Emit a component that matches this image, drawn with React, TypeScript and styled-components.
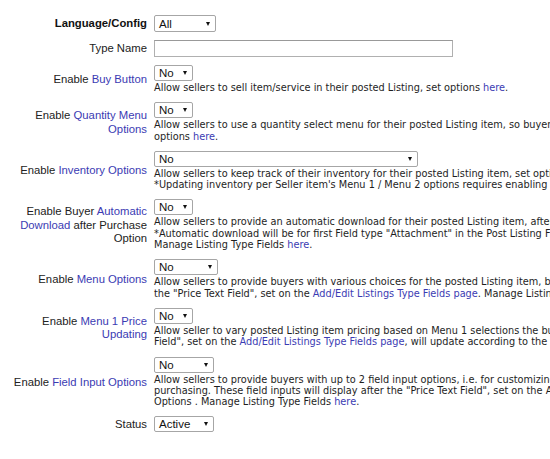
import React from "react";
import styled, { createGlobalStyle } from "styled-components";

const GlobalStyle = createGlobalStyle`
  html, body {
    margin: 0;
    padding: 0;
    background: #ffffff;
    overflow: hidden;
  }
  body {
    font-family: "Liberation Sans", Arial, sans-serif;
    color: #222222;
  }
`;

const Form = styled.div`
  display: flex;
  flex-direction: column;
  gap: 8px;
  padding: 15px 0 0 8px;
  width: 900px;
`;

const Row = styled.div`
  display: grid;
  grid-template-columns: 139px 1fr;
  column-gap: 7px;
  align-items: center;
`;

const Label = styled.div<{ $bold?: boolean }>`
  text-align: right;
  font-family: "Liberation Sans", Arial, sans-serif;
  font-size: 11.3px;
  line-height: 13.4px;
  font-weight: ${(p) => (p.$bold ? 700 : 400)};
  color: ${(p) => (p.$bold ? "#111111" : "#222222")};
`;

const Link = styled.span`
  color: #3b3bb3;
`;

const Field = styled.div`
  display: flex;
  flex-direction: column;
  align-items: flex-start;
  min-width: 0;
`;

const SelectBox = styled.div<{ $w: number; $h?: number }>`
  box-sizing: border-box;
  width: ${(p) => p.$w}px;
  height: ${(p) => p.$h ?? 16}px;
  display: flex;
  align-items: center;
  justify-content: space-between;
  padding: 0 4px 0 4px;
  border: 1px solid #a6a6a6;
  border-radius: 2px;
  background: #ffffff;
  font-family: "Liberation Sans", Arial, sans-serif;
  font-size: 11.5px;
  color: #111111;
`;

const Arrow = styled.span`
  width: 0;
  height: 0;
  border-left: 2.5px solid transparent;
  border-right: 2.5px solid transparent;
  border-top: 4px solid #111111;
  margin-right: 1px;
`;

const TextInput = styled.div`
  box-sizing: border-box;
  width: 299px;
  height: 17px;
  border: 1px solid #b0b0b0;
  border-top-color: #999999;
  background: #ffffff;
`;

const Desc = styled.div`
  margin-top: 1px;
  padding-bottom: 1px;
  font-family: "DejaVu Sans", Verdana, sans-serif;
  font-size: 9.75px;
  line-height: 11.3px;
  color: #1e1e1e;
`;

const Line = styled.div`
  white-space: nowrap;
`;

const Select = ({ value, w, h }: { value: string; w: number; h?: number }) => (
  <SelectBox $w={w} $h={h}>
    <span>{value}</span>
    <Arrow />
  </SelectBox>
);

export default function App() {
  return (
    <>
      <GlobalStyle />
      <Form>
        <Row>
          <Label $bold>Language/Config</Label>
          <Field>
            <Select value="All" w={62} h={17} />
          </Field>
        </Row>

        <Row>
          <Label>Type Name</Label>
          <Field>
            <TextInput />
          </Field>
        </Row>

        <Row>
          <Label>
            Enable <Link>Buy Button</Link>
          </Label>
          <Field>
            <Select value="No" w={39} />
            <Desc>
              <Line>
                Allow sellers to sell item/service in their posted Listing, set options <Link>here</Link>.
              </Line>
            </Desc>
          </Field>
        </Row>

        <Row>
          <Label>
            Enable <Link>Quantity Menu Options</Link>
          </Label>
          <Field>
            <Select value="No" w={39} />
            <Desc>
              <Line>
                Allow sellers to use a quantity select menu for their posted Listing item, so buyers can choose how many to purchase, set
              </Line>
              <Line>
                options <Link>here</Link>.
              </Line>
            </Desc>
          </Field>
        </Row>

        <Row>
          <Label>
            Enable <Link>Inventory Options</Link>
          </Label>
          <Field>
            <Select value="No" w={264} />
            <Desc>
              <Line>
                Allow sellers to keep track of their inventory for their posted Listing item, set options <Link>here</Link>.
              </Line>
              <Line>
                *Updating inventory per Seller item's Menu 1 / Menu 2 options requires enabling Menu Options.
              </Line>
            </Desc>
          </Field>
        </Row>

        <Row>
          <Label>
            Enable Buyer <Link>Automatic Download</Link> after Purchase Option
          </Label>
          <Field>
            <Select value="No" w={39} />
            <Desc>
              <Line>
                Allow sellers to provide an automatic download for their posted Listing item, after purchase.
              </Line>
              <Line>
                *Automatic download will be for first Field type "Attachment" in the Post Listing Form.
              </Line>
              <Line>
                Manage Listing Type Fields <Link>here</Link>.
              </Line>
            </Desc>
          </Field>
        </Row>

        <Row>
          <Label>
            Enable <Link>Menu Options</Link>
          </Label>
          <Field>
            <Select value="No" w={64} />
            <Desc>
              <Line>
                Allow sellers to provide buyers with various choices for the posted Listing item, before
              </Line>
              <Line>
                the "Price Text Field", set on the <Link>Add/Edit Listings Type Fields page</Link>. Manage Listing Type Fields <Link>here</Link>.
              </Line>
            </Desc>
          </Field>
        </Row>

        <Row>
          <Label>
            Enable <Link>Menu 1 Price Updating</Link>
          </Label>
          <Field>
            <Select value="No" w={39} />
            <Desc>
              <Line>
                Allow seller to vary posted Listing item pricing based on Menu 1 selections the buyer makes. The "Price Text
              </Line>
              <Line>
                Field", set on the <Link>Add/Edit Listings Type Fields page</Link>, will update according to the selection.
              </Line>
            </Desc>
          </Field>
        </Row>

        <Row>
          <Label>
            Enable <Link>Field Input Options</Link>
          </Label>
          <Field>
            <Select value="No" w={60} />
            <Desc>
              <Line>
                Allow sellers to provide buyers with up to 2 field input options, i.e. for customizing the Listing item when
              </Line>
              <Line>
                purchasing. These field inputs will display after the "Price Text Field", set on the Add/Edit Listings Type Fields
              </Line>
              <Line>
                Options . Manage Listing Type Fields <Link>here</Link>.
              </Line>
            </Desc>
          </Field>
        </Row>

        <Row>
          <Label>Status</Label>
          <Field>
            <Select value="Active" w={60} />
          </Field>
        </Row>
      </Form>
    </>
  );
}
